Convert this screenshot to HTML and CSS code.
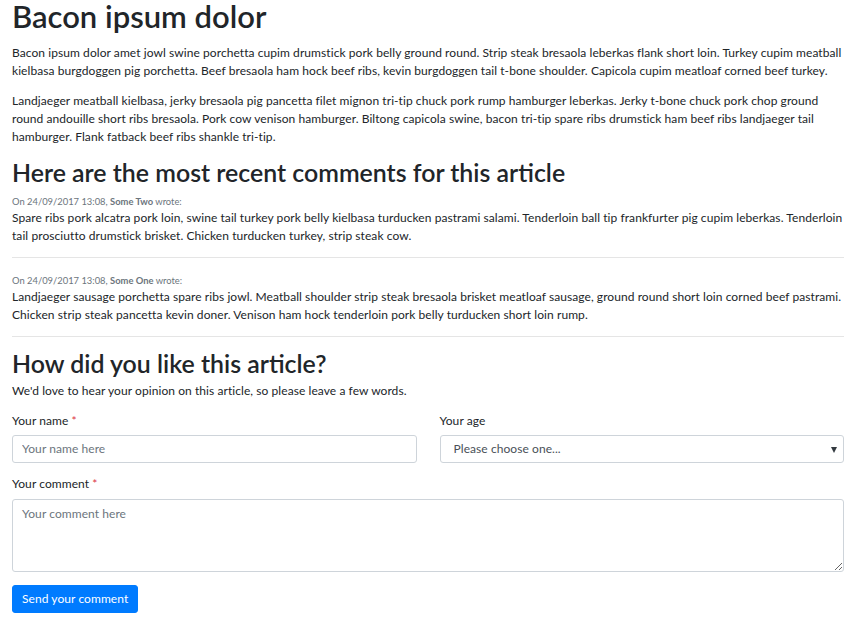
FILE: index.html
```html
<!DOCTYPE html>
<html lang="en">
<head>
<meta charset="utf-8">
<title>Bacon ipsum dolor</title>
<link rel="stylesheet" href="styles.css">
</head>
<body>
<div class="page">
  <h1 class="title">Bacon ipsum dolor</h1>
  <p class="text">Bacon ipsum dolor amet jowl swine porchetta cupim drumstick pork belly ground round. Strip steak bresaola leberkas flank short loin. Turkey cupim meatball kielbasa burgdoggen pig porchetta. Beef bresaola ham hock beef ribs, kevin burgdoggen tail t-bone shoulder. Capicola cupim meatloaf corned beef turkey.</p>
  <p class="text">Landjaeger meatball kielbasa, jerky bresaola pig pancetta filet mignon tri-tip chuck pork rump hamburger leberkas. Jerky t-bone chuck pork chop ground round andouille short ribs bresaola. Pork cow venison hamburger. Biltong capicola swine, bacon tri-tip spare ribs drumstick ham beef ribs landjaeger tail hamburger. Flank fatback beef ribs shankle tri-tip.</p>

  <h2 class="heading heading-comments">Here are the most recent comments for this article</h2>
  <div class="comment">
    <div class="comment-meta">On 24/09/2017 13:08, <strong>Some Two</strong> wrote:</div>
    <p class="text">Spare ribs pork alcatra pork loin, swine tail turkey pork belly kielbasa turducken pastrami salami. Tenderloin ball tip frankfurter pig cupim leberkas. Tenderloin tail prosciutto drumstick brisket. Chicken turducken turkey, strip steak cow.</p>
  </div>
  <hr class="divider divider-between">
  <div class="comment">
    <div class="comment-meta">On 24/09/2017 13:08, <strong>Some One</strong> wrote:</div>
    <p class="text">Landjaeger sausage porchetta spare ribs jowl. Meatball shoulder strip steak bresaola brisket meatloaf sausage, ground round short loin corned beef pastrami. Chicken strip steak pancetta kevin doner. Venison ham hock tenderloin pork belly turducken short loin rump.</p>
  </div>
  <hr class="divider">

  <h2 class="heading heading-form">How did you like this article?</h2>
  <p class="text">We'd love to hear your opinion on this article, so please leave a few words.</p>

  <form class="form" action="#">
    <div class="form-row">
      <div class="field">
        <label class="label" for="name">Your name <span class="req">*</span></label>
        <input class="control" id="name" type="text" placeholder="Your name here">
      </div>
      <div class="field">
        <label class="label" for="age">Your age</label>
        <div class="select-wrap">
          <select class="control select" id="age">
            <option>Please choose one...</option>
            <option>Under 18</option>
            <option>18 - 30</option>
            <option>31 - 50</option>
            <option>Over 50</option>
          </select>
        </div>
      </div>
    </div>
    <div class="field field-comment">
      <label class="label label-comment" for="comment">Your comment <span class="req">*</span></label>
      <textarea class="control textarea" id="comment" placeholder="Your comment here"></textarea>
    </div>
    <button class="btn" type="submit">Send your comment</button>
  </form>
</div>
</body>
</html>
```

FILE: styles.css
```css
* { box-sizing: border-box; }

html, body {
  margin: 0;
  padding: 0;
  background: #ffffff;
}

body {
  font-family: Lato, "Liberation Sans", sans-serif;
  font-size: 12px;
  line-height: 18px;
  letter-spacing: 0.07px;
  color: #212529;
}

.page {
  padding: 0 13px 0 12px;
}

.title {
  font-size: 31px;
  font-weight: 600;
  line-height: 33px;
  letter-spacing: 0;
  margin: 0 0 11px;
  color: #212529;
}

.text {
  margin: 0 0 12px;
}

.heading {
  font-size: 24.9px;
  font-weight: 600;
  line-height: 28.8px;
  letter-spacing: 0;
  margin: 0;
  color: #212529;
}

.heading-comments { margin-bottom: 7px; }
.heading-form { margin-bottom: 4px; }

.comment-meta {
  font-size: 9.4px;
  line-height: 15px;
  letter-spacing: 0;
  color: #6c757d;
}

.comment-meta strong { font-weight: 700; }

.divider {
  border: 0;
  border-top: 1px solid rgba(0, 0, 0, 0.1);
  margin: 12px 0 12px;
  height: 0;
}

.divider-between { margin-bottom: 15px; }

.form { margin: 0; }

.form-row {
  display: grid;
  grid-template-columns: 1fr 1fr;
  column-gap: 23px;
}

.field { margin-bottom: 12px; }

.field-comment { margin-bottom: 12.5px; }

.label {
  display: block;
  margin-bottom: 5px;
}

.label-comment { margin-bottom: 6px; }

.req { color: #dc3545; }

.control {
  display: block;
  width: 100%;
  height: 28.5px;
  padding: 4.5px 9px;
  font-family: inherit;
  font-size: 12px;
  line-height: 18px;
  letter-spacing: 0.07px;
  color: #495057;
  background: #ffffff;
  border: 1px solid #ced4da;
  border-radius: 3px;
  margin: 0;
}

.control::placeholder { color: #6c757d; opacity: 1; }

.select-wrap { position: relative; }

.select {
  -webkit-appearance: none;
  appearance: none;
  padding-left: 13px;
  padding-right: 24px;
}

.select-wrap::after {
  content: "";
  position: absolute;
  right: 7px;
  top: 12px;
  border-left: 3.5px solid transparent;
  border-right: 3.5px solid transparent;
  border-top: 6px solid #333a40;
  pointer-events: none;
}

.textarea {
  height: 73px;
  resize: vertical;
}

.btn {
  display: inline-block;
  font-family: inherit;
  font-size: 12px;
  line-height: 18px;
  letter-spacing: 0.07px;
  height: 28.5px;
  padding: 4.5px 9px;
  color: #ffffff;
  background: #007bff;
  border: 1px solid #007bff;
  border-radius: 3px;
  cursor: pointer;
}
```
